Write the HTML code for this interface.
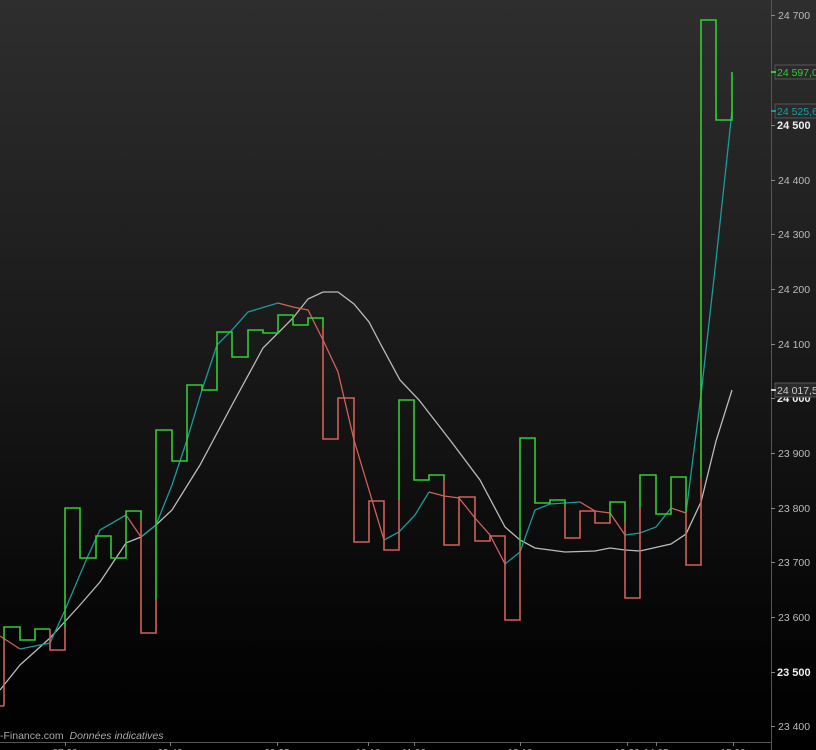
<!DOCTYPE html>
<html><head><meta charset="utf-8"><style>
html,body{margin:0;padding:0;background:#000}
svg{display:block}
text{font-family:"Liberation Sans",sans-serif}
</style></head><body>
<svg width="816" height="750" viewBox="0 0 816 750" xmlns="http://www.w3.org/2000/svg">
<defs>
<linearGradient id="bg" x1="0" y1="0" x2="0" y2="1">
<stop offset="0" stop-color="#2e2e2e"/>
<stop offset="0.45" stop-color="#1a1a1a"/>
<stop offset="0.85" stop-color="#050505"/>
<stop offset="1" stop-color="#000"/>
</linearGradient>
</defs>
<rect x="0" y="0" width="816" height="750" fill="url(#bg)"/>
<!-- axis -->
<line x1="771.5" y1="0" x2="771.5" y2="750" stroke="#555" stroke-width="1"/>
<line x1="0" y1="742.5" x2="771" y2="742.5" stroke="#555" stroke-width="1"/>
<g stroke="#777" stroke-width="1">
<line x1="65.5" y1="742" x2="65.5" y2="746"/><line x1="170.5" y1="742" x2="170.5" y2="746"/><line x1="277.5" y1="742" x2="277.5" y2="746"/><line x1="368.5" y1="742" x2="368.5" y2="746"/><line x1="414.5" y1="742" x2="414.5" y2="746"/><line x1="520.5" y1="742" x2="520.5" y2="746"/><line x1="627.5" y1="742" x2="627.5" y2="746"/><line x1="656.5" y1="742" x2="656.5" y2="746"/><line x1="733.5" y1="742" x2="733.5" y2="746"/>
</g>
<g fill="#aaa" font-size="10" text-anchor="middle">
<text x="65" y="756">07:30</text><text x="170" y="756">08:40</text><text x="277" y="756">09:25</text><text x="368" y="756">10:10</text><text x="414" y="756">11:00</text><text x="520" y="756">13:10</text><text x="627" y="756">13:30</text><text x="656" y="756">14:05</text><text x="733" y="756">15:00</text>
</g>
<text x="0" y="739" fill="#aaa" font-size="10.5">-Finance.com <tspan font-style="italic" dx="3">Données indicatives</tspan></text>
<g stroke="#888" stroke-width="1">
<line x1="771" y1="15.5" x2="775" y2="15.5"/><line x1="771" y1="125.5" x2="775" y2="125.5"/><line x1="771" y1="180.5" x2="775" y2="180.5"/><line x1="771" y1="234.5" x2="775" y2="234.5"/><line x1="771" y1="289.5" x2="775" y2="289.5"/><line x1="771" y1="344.5" x2="775" y2="344.5"/><line x1="771" y1="398.5" x2="775" y2="398.5"/><line x1="771" y1="453.5" x2="775" y2="453.5"/><line x1="771" y1="508.5" x2="775" y2="508.5"/><line x1="771" y1="562.5" x2="775" y2="562.5"/><line x1="771" y1="617.5" x2="775" y2="617.5"/><line x1="771" y1="672.5" x2="775" y2="672.5"/><line x1="771" y1="726.5" x2="775" y2="726.5"/>
</g>
<g fill="#bbb" font-size="10.5">
<text x="778" y="19">24 700</text>
<text x="778" y="184">24 400</text><text x="778" y="238">24 300</text><text x="778" y="293">24 200</text><text x="778" y="348">24 100</text>
<text x="778" y="457">23 900</text><text x="778" y="512">23 800</text><text x="778" y="566">23 700</text><text x="778" y="621">23 600</text><text x="778" y="730">23 400</text>
</g>
<g fill="#eee" font-size="11" font-weight="bold">
<text x="777" y="129">24 500</text><text x="777" y="402">24 000</text><text x="777" y="676">23 500</text>
</g>
<rect x="775" y="65" width="42" height="14" fill="#2a2a2a" stroke="#555"/>
<line x1="771" y1="72" x2="776" y2="72" stroke="#3c3" stroke-width="2"/>
<text x="777" y="76" fill="#3c3" font-size="10.5">24 597,0</text>
<rect x="775" y="104" width="42" height="14" fill="#2a2a2a" stroke="#555"/>
<line x1="771" y1="111" x2="776" y2="111" stroke="#1a9a9a" stroke-width="2"/>
<text x="777" y="115" fill="#1aa0a0" font-size="10.5">24 525,6</text>
<rect x="775" y="383" width="42" height="14" fill="#2a2a2a" stroke="#555"/>
<line x1="771" y1="390" x2="776" y2="390" stroke="#ccc" stroke-width="2"/>
<text x="777" y="394" fill="#ccc" font-size="10.5">24 017,5</text>

<!-- slow MA -->
<polyline fill="none" stroke="#bbb" stroke-width="1.3" points="0,690 20,665 50,638 80,605 100,582 126,543 141,537 156,525 172,510 200,465 232,405 263,348 293,318 308,299 323,292 338,292 354,304 369,322 380,343 400,380 419,400 450,440 480,480 505,527 520,540 535,548 565,552 595,551 610,548 625,550 640,551 671,544 686,534 701,502 716,441 732,390"/>
<!-- fast MA -->
<polyline fill="none" stroke="#1a9a9a" stroke-width="1.3" points="20,649 50,643 65,610 87,558 100,530 126,515"/>
<polyline fill="none" stroke="#1a9a9a" stroke-width="1.3" points="141,537 156,525 172,485 187,440 202,390 217,345 232,330 248,312 278,303"/>
<polyline fill="none" stroke="#1a9a9a" stroke-width="1.3" points="384,540 399,532 415,515 429,492"/>
<polyline fill="none" stroke="#1a9a9a" stroke-width="1.3" points="505,564 520,552 535,510 550,504 580,502"/>
<polyline fill="none" stroke="#1a9a9a" stroke-width="1.3" points="625,535 640,533 656,527 671,508"/>
<polyline fill="none" stroke="#1a9a9a" stroke-width="1.3" points="686,513 701,395 716,260 732,111"/>
<g fill="none" stroke="#d0605a" stroke-width="1.3">
<polyline points="0,636 20,649"/>
<polyline points="126,515 141,537"/>
<polyline points="278,303 293,307 308,310 323,340 338,372 354,440 369,490 384,540"/>
<polyline points="429,492 444,496 459,498 475,518 490,535 505,564"/>
<polyline points="580,502 595,511 610,513 625,535"/>
<polyline points="671,508 686,513"/>
</g>

<!-- candles step path -->
<g fill="none" stroke-width="1.6" stroke-linejoin="miter">
<path stroke="#d0605a" d="M4 706V640M0 706H4"/>
<path stroke="#3c3" d="M4 640V627H20V640H35V629H50"/>
<path stroke="#d0605a" d="M50 629V650H65V628"/>
<path stroke="#3c3" d="M65 628V508H80V558H96V536H111V558H126V511H141V520"/>
<path stroke="#d0605a" d="M141 520V633H156V600"/>
<path stroke="#3c3" d="M156 600V430H172V461H187V385H202V390H217V332H232V357H248V330H263V333H278V315H293V325H308V318H323V328"/>
<path stroke="#d0605a" d="M323 328V439H338V398H354V542H369V501H384V550H399V500"/>
<path stroke="#3c3" d="M399 500V400H414V480H429V475H444V480"/>
<path stroke="#d0605a" d="M444 480V545H459V497H475V541H490V536H505V620H520V545"/>
<path stroke="#3c3" d="M520 545V438H535V503H550V500H565V505"/>
<path stroke="#d0605a" d="M565 505V538H580V511H595V523H610V518"/>
<path stroke="#3c3" d="M610 518V502H625V522"/>
<path stroke="#d0605a" d="M625 522V598H640V508"/>
<path stroke="#3c3" d="M640 508V475H656V514H671V477H686V512"/>
<path stroke="#d0605a" d="M686 512V565H701V478"/>
<path stroke="#3c3" d="M701 478V20H716V120H732V72"/>
</g>
</svg>
</body></html>
